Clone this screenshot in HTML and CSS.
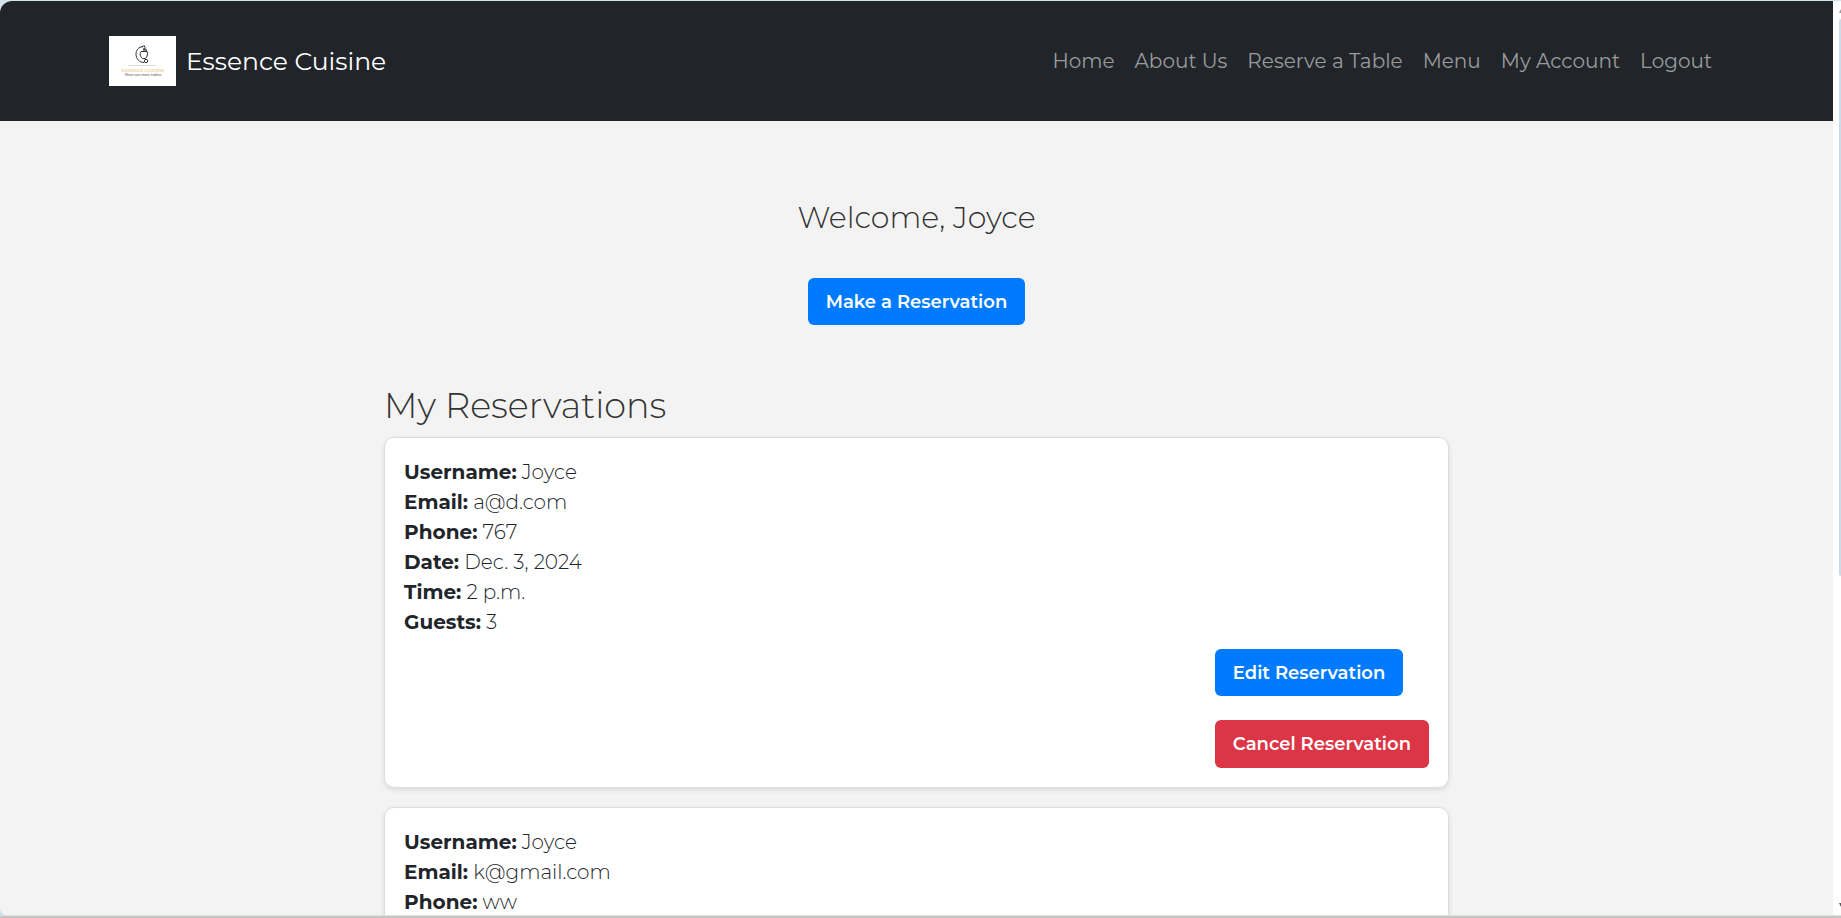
FILE: index.html
```
<!DOCTYPE html>
<html lang="en">
<head>
<meta charset="utf-8">
<meta name="viewport" content="width=device-width, initial-scale=1">
<title>Essence Cuisine</title>
<link rel="stylesheet" href="styles.css">
</head>
<body>
<div class="window">
  <div class="viewport">
    <div class="page">
      <header class="navbar">
        <a class="brand" href="#">
          <svg class="logo" viewBox="0 0 67 50" role="img" aria-label="Essence Cuisine logo">
            <rect width="67" height="50" fill="#fff"/>
            <g fill="none" stroke="#333" stroke-width="1">
              <path d="M34 10.500c-4.500.3-7 4-7 7.500 0 5 3.500 8.500 8 8.500"/>
              <path d="M32 15.500h6c1 2 .5 5-1.500 7h-3c-2.500-2-3-5-1.500-7z"/>
              <path d="M33 11.500l2-2 1 2-1.500 2 2.500 0 1 2"/>
              <circle cx="37" cy="25" r="1.700"/>
            </g>
            <path d="M34 12.500h3l1 2h-4z" fill="#444"/>
            <path d="M19 29.500h28" stroke="#ddd" stroke-width="1"/>
            <text x="34" y="36" class="logo-name">ESSENCE CUISINE</text>
            <text x="34" y="40" class="logo-tag">Where taste meets tradition</text>
          </svg>
          <span>Essence Cuisine</span>
        </a>
        <nav class="links" aria-label="Main">
          <a href="#">Home</a>
          <a href="#">About Us</a>
          <a href="#">Reserve a Table</a>
          <a href="#">Menu</a>
          <a href="#">My Account</a>
          <a href="#">Logout</a>
        </nav>
      </header>
      <main class="content">
        <section class="welcome">
          <h1>Welcome, Joyce</h1>
          <button class="btn" type="button">Make a Reservation</button>
        </section>
        <section class="reservations">
          <h2>My Reservations</h2>
          <article class="card">
            <div class="details">
              <p><strong>Username:</strong> Joyce</p>
              <p><strong>Email:</strong> a@d.com</p>
              <p><strong>Phone:</strong> 767</p>
              <p><strong>Date:</strong> Dec. 3, 2024</p>
              <p><strong>Time:</strong> 2 p.m.</p>
              <p><strong>Guests:</strong> 3</p>
            </div>
            <div class="actions">
              <button class="btn" type="button">Edit Reservation</button>
              <button class="btn btn-danger" type="button">Cancel Reservation</button>
            </div>
          </article>
          <article class="card">
            <div class="details">
              <p><strong>Username:</strong> Joyce</p>
              <p><strong>Email:</strong> k@gmail.com</p>
              <p><strong>Phone:</strong> ww</p>
            </div>
          </article>
        </section>
      </main>
    </div>
    <div class="scrollbar" aria-hidden="true">
      <svg class="arrow" viewBox="0 0 2 4"><path d="M0 4L2 0V4z" fill="#999"/></svg>
      <div class="thumb"></div>
      <svg class="arrow arrow-down" viewBox="0 0 2 4"><path d="M0 0H2V4z" fill="#555"/></svg>
    </div>
  </div>
</div>
</body>
</html>
```
FILE: styles.css
```
* { box-sizing: border-box; }

body {
  margin: 0;
  font-family: Montserrat, Inter, sans-serif;
  font-size: 20px;
  font-weight: 300;
  line-height: 30px;
  color: #212529;
  background: #d3e2ec;
}

h1, h2, p { margin: 0; }

.window {
  display: flex;
  flex-direction: column;
  height: 100vh;
  padding-top: 1px;
  border-bottom: 2px solid #cfc4bd;
}

.viewport {
  display: flex;
  flex: 1;
  min-height: 0;
  margin-bottom: 1px;
  overflow: hidden;
  border-radius: 12px 0 0 8px;
  background: #fff;
}

.page {
  flex: 1;
  min-width: 0;
  overflow: hidden;
  background: #f3f3f3;
}

.navbar {
  display: flex;
  align-items: center;
  justify-content: space-between;
  height: 120px;
  padding: 0 109px;
  background: #212529;
}

.brand {
  display: flex;
  align-items: center;
  gap: 10px;
  font-size: 25px;
  font-weight: 400;
  color: #fff;
  text-decoration: none;
}

.logo { display: block; width: 67px; height: 50px; }

.logo-name {
  font-family: "Liberation Serif", serif;
  font-size: 5px;
  font-weight: 400;
  fill: #efb560;
  text-anchor: middle;
}

.logo-tag {
  font-family: "Liberation Sans", sans-serif;
  font-size: 3px;
  font-weight: 400;
  fill: #555;
  text-anchor: middle;
}

.links { display: flex; padding-right: 2px; }

.links a {
  padding: 10px;
  font-weight: 400;
  color: #999b9d;
  text-decoration: none;
}

.content {
  width: 58.1%;
  margin: 0 auto;
  padding-top: 78px;
}

.welcome {
  display: flex;
  flex-direction: column;
  align-items: center;
  gap: 42px;
}

h1 {
  font-size: 30px;
  font-weight: 300;
  line-height: 37px;
  color: #333;
}

.btn {
  height: 47px;
  padding: 0 18px;
  border: 0;
  border-radius: 6px;
  font: 600 18px/28px Montserrat, Inter, sans-serif;
  color: #fff;
  background: #007bff;
}

.btn-danger {
  height: 48px;
  background: #dc3545;
}

.reservations { padding-top: 59px; }

h2 {
  padding-bottom: 9px;
  font-size: 35px;
  font-weight: 300;
  line-height: 44px;
  color: #333;
}

.card {
  margin-bottom: 19px;
  padding: 19px;
  border: 1px solid #ddd;
  border-radius: 10px;
  background: #fff;
  box-shadow: 0 2px 5px rgba(0, 0, 0, 0.1);
}

.details strong { font-weight: 700; }

.actions {
  display: flex;
  flex-direction: column;
  align-items: flex-start;
  gap: 24px;
  width: fit-content;
  margin: 12px 0 0 auto;
}

.scrollbar {
  display: flex;
  flex-direction: column;
  align-items: flex-end;
  width: 8px;
  padding: 8px 0;
  background: #fff;
}

.arrow { width: 2px; height: 4px; }

.thumb {
  width: 2px;
  height: 62%;
  margin-top: 6px;
  border-radius: 2px 0 0 2px;
  background: #ccdbe8;
}

.arrow-down { margin-top: auto; }
```
